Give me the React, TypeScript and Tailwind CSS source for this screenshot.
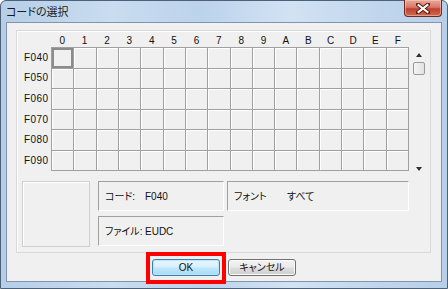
import React from 'react';

const cols = ['0', '1', '2', '3', '4', '5', '6', '7', '8', '9', 'A', 'B', 'C', 'D', 'E', 'F'];
const rows = ['F040', 'F050', 'F060', 'F070', 'F080', 'F090'];

function CloseButton() {
    return (
        <div className="-mt-px flex h-[17px] w-[38px] items-center justify-center rounded-b-[4px] border border-t-0 border-[#6e2a20] bg-[linear-gradient(180deg,#e9a99a_0%,#d8786a_45%,#c0412f_55%,#cf6a4f_100%)] shadow-[inset_0_0_0_1px_rgba(255,210,200,0.5)]">
            <svg width="14" height="11" viewBox="0 0 14 11">
                <path
                    d="M2 1.5 L12 9.5 M12 1.5 L2 9.5"
                    stroke="#5a1a12"
                    strokeWidth="4"
                    strokeLinecap="square"
                />
                <path
                    d="M2.5 2 L11.5 9 M11.5 2 L2.5 9"
                    stroke="#ffffff"
                    strokeWidth="2"
                    strokeLinecap="square"
                />
            </svg>
        </div>
    );
}

function Scrollbar() {
    return (
        <div className="ml-[3px] flex h-[140px] w-[14px] flex-col items-center pt-[22px]">
            <div className="h-0 w-0 shrink-0 border-x-[3.5px] border-b-[4px] border-x-transparent border-b-[#303030]" />
            <div className="mt-[5px] h-[13px] w-[12px] shrink-0 rounded-[2px] border border-[#9a9a9a] bg-[linear-gradient(90deg,#f4f4f4,#e2e2e2)]" />
            <div className="mt-[92px] h-0 w-0 shrink-0 border-x-[3.5px] border-t-[4px] border-x-transparent border-t-[#303030]" />
        </div>
    );
}

function InfoBox({ label, value, valueLeft, width }: { label: string; value: string; valueLeft: string; width: string }) {
    return (
        <div className={`flex h-[30px] items-center border-l border-t border-b border-r border-l-[#a0a0a0] border-t-[#a0a0a0] border-b-white border-r-white ${width}`}>
            <span className={`shrink-0 pl-[6px] text-[10px] ${valueLeft}`}>{label}</span>
            <span className="text-[10px]">{value}</span>
        </div>
    );
}

export default function App() {
    return (
        <div className="h-[289px] w-[448px] overflow-hidden bg-white font-['Liberation_Sans','Noto_Sans_CJK_JP',sans-serif] text-[#111] [font-feature-settings:'palt']">
            <div className="flex h-full flex-col rounded-t-[6px] border border-[#4d6178] bg-[linear-gradient(90deg,#b6cee8_0%,#c9dcf0_25%,#bcd3ec_45%,#d2e2f3_65%,#c0d6ed_85%,#b8cfe9_100%)] px-[5px] pb-[6px]">
                <div className="flex h-[21px] items-start justify-between">
                    <span className="pt-[4px] text-[11px] leading-[14px] text-[#1a1a1a]">
                        コードの選択
                    </span>
                    <CloseButton />
                </div>

                <div className="flex flex-1 flex-col border border-[#8195ae] bg-[#f0f0f0]">
                    <div className="ml-[9px] mr-[10px] mt-[7px] flex h-[223px] flex-col border border-[#d9d9d9] shadow-[inset_1px_1px_0_#ffffff]">
                        <div className="flex items-start">
                            <div className="flex w-[34px] flex-col">
                                <div className="h-[16px]" />
                                <div className="grid h-[124px] grid-rows-6">
                                    {rows.map((r) => (
                                        <div key={r} className="flex items-center pl-[7px] text-[10px] tracking-[0.4px]">
                                            {r}
                                        </div>
                                    ))}
                                </div>
                            </div>
                            <div className="flex w-[358px] flex-col">
                                <div className="grid h-[16px] grid-cols-16">
                                    {cols.map((c) => (
                                        <div key={c} className="flex items-center justify-center pt-[2px] text-[10px]">
                                            {c}
                                        </div>
                                    ))}
                                </div>
                                <div className="grid h-[124px] grid-cols-16 grid-rows-6 border-l border-t border-[#a0a0a0]">
                                    {rows.map((r, ri) =>
                                        cols.map((c, ci) => (
                                            <div
                                                key={r + c}
                                                className={
                                                    ri === 0 && ci === 0
                                                        ? 'border-b border-r border-[#a0a0a0] bg-[#f0f0f0] shadow-[inset_0_0_0_2px_#8c8c8c]'
                                                        : 'border-b border-r border-[#a0a0a0] bg-[#f0f0f0] shadow-[inset_1px_1px_0_#ffffff]'
                                                }
                                            />
                                        ))
                                    )}
                                </div>
                            </div>
                            <Scrollbar />
                        </div>

                        <div className="mt-[10px] flex pl-[5px]">
                            <div className="h-[66px] w-[68px] border border-[#cfcfcf] shadow-[inset_1px_1px_0_#ffffff]" />
                            <div className="ml-[8px] flex flex-col gap-[5px]">
                                <InfoBox label="コード:" value="F040" valueLeft="w-[46px]" width="w-[126px]" />
                                <InfoBox label="ファイル:" value="EUDC" valueLeft="w-[46px]" width="w-[126px]" />
                            </div>
                            <div className="ml-[3px]">
                                <InfoBox label="フォント" value="すべて" valueLeft="w-[59px]" width="w-[182px]" />
                            </div>
                        </div>
                    </div>

                    <div className="flex flex-1 items-center justify-center gap-[8px] pt-px">
                        <div className="relative">
                            <div className="flex h-[17px] w-[68px] items-center justify-center rounded-[3px] border border-[#3c7fb1] bg-[linear-gradient(180deg,#eaf6fd_0%,#d9f0fc_45%,#bee6fd_55%,#a7d9f5_100%)] text-[10px] shadow-[inset_0_0_0_1px_#bfe4f8]">
                                OK
                            </div>
                            <div className="pointer-events-none absolute -bottom-[8px] -left-[6px] -right-[6px] -top-[7px] border-[4px] border-[#f00]" />
                        </div>
                        <div className="flex h-[17px] w-[68px] items-center justify-center rounded-[3px] border border-[#707070] bg-[linear-gradient(180deg,#f2f2f2_0%,#ebebeb_45%,#dddddd_55%,#cfcfcf_100%)] text-[10px] shadow-[inset_0_0_0_1px_#fcfcfc]">
                            キャンセル
                        </div>
                    </div>
                </div>
            </div>
        </div>
    );
}
